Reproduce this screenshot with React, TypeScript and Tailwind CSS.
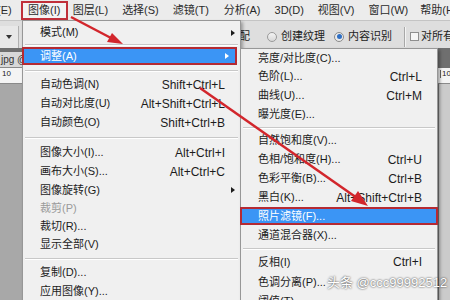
type Row = {
  label?: string;
  sc?: string;
  arrow?: boolean;
  dis?: boolean;
  hl?: boolean;
  sep?: string;
  h?: string;
};

const mainMenu: Row[] = [
  { label: "模式(M)", arrow: true, h: "h-[19px]" },
  { sep: "h-[5px]" },
  { label: "调整(A)", arrow: true, hl: true, h: "h-[18px]" },
  { sep: "h-[10px]" },
  { label: "自动色调(N)", sc: "Shift+Ctrl+L" },
  { label: "自动对比度(U)", sc: "Alt+Shift+Ctrl+L" },
  { label: "自动颜色(O)", sc: "Shift+Ctrl+B" },
  { sep: "h-[11px]" },
  { label: "图像大小(I)...", sc: "Alt+Ctrl+I" },
  { label: "画布大小(S)...", sc: "Alt+Ctrl+C" },
  { label: "图像旋转(G)", arrow: true, h: "h-[18px]" },
  { label: "裁剪(P)", dis: true, h: "h-[18px]" },
  { label: "裁切(R)...", h: "h-[18px]" },
  { label: "显示全部(V)" },
  { sep: "h-[9px]" },
  { label: "复制(D)..." },
  { label: "应用图像(Y)..." },
];

const subMenu: Row[] = [
  { label: "亮度/对比度(C)...", h: "h-[18px]" },
  { label: "色阶(L)...", sc: "Ctrl+L" },
  { label: "曲线(U)...", sc: "Ctrl+M" },
  { label: "曝光度(E)..." },
  { sep: "h-[7px]" },
  { label: "自然饱和度(V)..." },
  { label: "色相/饱和度(H)...", sc: "Ctrl+U" },
  { label: "色彩平衡(B)...", sc: "Ctrl+B" },
  { label: "黑白(K)...", sc: "Alt+Shift+Ctrl+B" },
  { label: "照片滤镜(F)...", hl: true, h: "h-[18px]" },
  { label: "通道混合器(X)...", h: "h-[20px]" },
  { sep: "h-[7px]" },
  { label: "反相(I)", sc: "Ctrl+I", h: "h-[20px]" },
  { label: "色调分离(P)...", h: "h-[20px]" },
  { label: "阈值(T)..." },
];

const menubar = [
  { t: "图层(L)", ml: "ml-[5px]" },
  { t: "选择(S)", ml: "ml-[14px]" },
  { t: "滤镜(T)", ml: "ml-[14px]" },
  { t: "分析(A)", ml: "ml-[15px]" },
  { t: "3D(D)", ml: "ml-[14px]" },
  { t: "视图(V)", ml: "ml-[14px]" },
  { t: "窗口(W)", ml: "ml-[14px]" },
  { t: "帮助(H)", ml: "ml-[12px]" },
];

function Tri({ white }: { white?: boolean }) {
  return (
    <span
      className={
        white
          ? "h-0 w-0 border-y-[3.5px] border-l-[4px] border-y-transparent border-l-white"
          : "h-0 w-0 border-y-[3.5px] border-l-[4px] border-y-transparent border-l-[#1c1c1c]"
      }
    />
  );
}

function MenuItems({ rows, main }: { rows: Row[]; main?: boolean }) {
  return (
    <>
      {rows.map((r, i) => {
        if (r.sep)
          return (
            <div key={i} className={`flex items-center px-[2px] ${r.sep}`}>
              <div className="h-px flex-1 bg-[#c8c8c8] shadow-[0_1px_0_#ffffff]" />
            </div>
          );
        const h = r.h ?? "h-[19px]";
        if (r.hl)
          return (
            <div
              key={i}
              className={
                main
                  ? `-ml-px mr-[3px] flex items-center border-2 border-[#b52a33] bg-[#3b95f5] text-white ${h}`
                  : `-mx-px flex items-center border-2 border-[#b52a33] bg-[#3b95f5] text-white ${h}`
              }
            >
              <span className="flex-1 pl-[16px] text-[11px]">{r.label}</span>
              {r.arrow && (
                <span className="flex w-[10px] justify-start">
                  <Tri white />
                </span>
              )}
            </div>
          );
        return (
          <div key={i} className={`flex items-center ${h} ${main ? "" : "pr-[15px]"}`}>
            <span
              className={
                r.dis ? "flex-1 pl-[17px] text-[11px] text-[#9a9a9a]" : "flex-1 pl-[17px] text-[11px] text-[#1c1c1c]"
              }
            >
              {r.label}
            </span>
            {r.sc && <span className="text-[12px] text-[#1c1c1c]">{r.sc}</span>}
            {main && <span className="flex w-[15px] justify-center">{r.arrow && <Tri />}</span>}
          </div>
        );
      })}
    </>
  );
}

export default function App() {
  return (
    <div className="relative h-[300px] w-[450px] overflow-hidden bg-[#a9a9a9] font-['Liberation_Sans','Noto_Sans_CJK_SC',sans-serif] leading-none text-[#222]">
      {/* 菜单栏 */}
      <div className="flex h-[20px] items-center overflow-hidden whitespace-nowrap bg-[#ececec] text-[11px] text-[#2a2a2a]">
        <span className="ml-[-25px] shrink-0">编辑(E)</span>
        <span className="ml-[9px] flex h-[19px] w-[47px] shrink-0 items-center justify-center border-2 border-[#c0303a] bg-[#f3f3f3]">
          图像(I)
        </span>
        {menubar.map((m) => (
          <span key={m.t} className={`shrink-0 ${m.ml}`}>
            {m.t}
          </span>
        ))}
      </div>

      {/* 选项栏 */}
      <div className="flex h-[28px] items-center overflow-hidden whitespace-nowrap border-t border-[#c4c4c4] bg-[#dedede] pt-[4px] text-[11px] text-[#222]">
        <div className="flex h-[22px] w-[19px] shrink-0 items-center justify-center border-r border-[#b0b0b0] bg-[#e8e8e8]">
          <span className="h-0 w-0 border-x-[3px] border-t-[4px] border-x-transparent border-t-[#333]" />
        </div>
        <span className="ml-[209px] shrink-0">匹配</span>
        <span className="ml-[17px] h-[10px] w-[10px] shrink-0 rounded-full border border-[#9a9a9a] bg-gradient-to-b from-[#f4f4f4] to-[#d8d8d8]" />
        <span className="ml-[4px] shrink-0">创建纹理</span>
        <span className="ml-[9px] flex h-[10px] w-[10px] shrink-0 items-center justify-center rounded-full border border-[#8a8a8a] bg-[#eaeaea]">
          <span className="h-[5px] w-[5px] rounded-full bg-[#2f6fc4]" />
        </span>
        <span className="ml-[4px] shrink-0">内容识别</span>
        <span className="ml-[12px] h-[20px] w-px shrink-0 bg-[#a8a8a8] shadow-[1px_0_0_#f4f4f4]" />
        <span className="ml-[5px] h-[9px] w-[9px] shrink-0 border border-[#8f8f8f] bg-[#f6f6f6]" />
        <span className="ml-[2px] shrink-0">对所有图层取样</span>
      </div>

      {/* 文档标签 */}
      <div className="flex h-[20px] items-end bg-[#6f6f6f]">
        <div className="flex h-[16px] w-[200px] items-center border-b border-[#8a8a8a] bg-[#d8d8d8] pl-[1px] text-[10px] text-[#333]">
          jpg @ 66.7%(RGB/8)
        </div>
      </div>

      {/* 标尺 */}
      <div className="flex h-[16px] items-start border-b border-[#8a8a8a] bg-[#f4f4f4] text-[8px] text-[#222]">
        <span className="ml-[2px] mt-[2px]">10</span>
        <span className="ml-auto mt-[2px] w-[10px] border-l border-[#666] pl-[1px]">10</span>
      </div>

      {/* 画布 */}
      <div className="flex h-[216px]">
        <div className="flex-1 bg-[#a8a8a8]" />
        <div className="w-[12px] border-l border-[#7a7a7a] bg-[#cbcbcb]" />
      </div>

      {/* 图像 菜单 */}
      <div className="absolute left-[22px] top-[20px] w-[219px] border border-[#979797] bg-[#f0f0f0] pt-[2px] pb-[4px] shadow-[2px_2px_3px_rgba(0,0,0,0.3)]">
        <MenuItems rows={mainMenu} main />
      </div>

      {/* 调整 子菜单 */}
      <div className="absolute left-[240px] top-[48px] w-[198px] border border-[#979797] bg-[#f0f0f0] pb-[4px] shadow-[2px_2px_3px_rgba(0,0,0,0.35)]">
        <MenuItems rows={subMenu} />
      </div>

      {/* 红色箭头 */}
      <svg className="pointer-events-none absolute inset-0" width="450" height="300" viewBox="0 0 450 300">
        <line x1="71" y1="17" x2="111" y2="38" stroke="#d2262c" strokeWidth="2.5" />
        <polygon points="123,44 107,42 112,33" fill="#d2262c" />
        <line x1="200" y1="88" x2="357" y2="198" stroke="#d2262c" strokeWidth="2.5" />
        <polygon points="368,206 351,201 358,191" fill="#d2262c" />
      </svg>

      {/* 水印 */}
      <div className="absolute left-[327px] top-[276px] whitespace-nowrap text-[13px] text-white [text-shadow:0_0_2px_rgba(0,0,0,0.9)]">
        头条 @ccc99992512
      </div>
    </div>
  );
}
